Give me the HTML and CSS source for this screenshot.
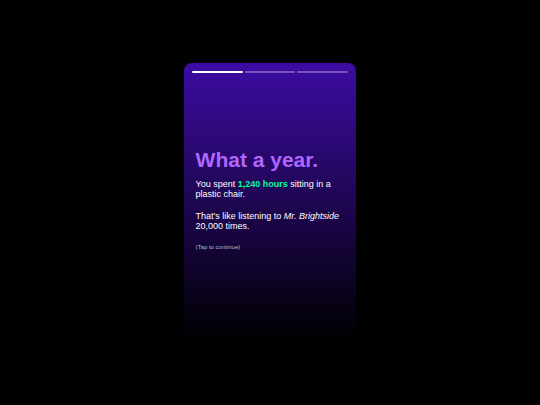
FILE: index.html
```
<!DOCTYPE html>
<html lang="en">
<head>
  <meta charset="UTF-8">
  <meta name="viewport" content="width=device-width, initial-scale=1.0">
  <title>What a year.</title>
  <link rel="stylesheet" href="styles.css">
</head>
<body>
  <main class="story">
    <div class="progress">
      <span class="bar active"></span>
      <span class="bar"></span>
      <span class="bar"></span>
    </div>
    <div class="slide">
      <h1>What a year.</h1>
      <p>You spent <strong>1,240 hours</strong> sitting in a plastic chair.</p>
      <p>That's like listening to <em>Mr. Brightside</em> 20,000 times.</p>
      <p class="hint">(Tap to continue)</p>
    </div>
  </main>
</body>
</html>
```
FILE: styles.css
```
* { margin: 0; padding: 0; box-sizing: border-box; }
body {
  min-height: 100vh;
  display: flex; align-items: center; justify-content: center;
  background: #000; color: #fff;
  font-family: "Liberation Sans", Arial, sans-serif;
  font-size: 9px; line-height: 10px;
}
.story {
  width: 32%; min-height: 69vh;
  display: flex; flex-direction: column;
  padding: 8px;
  background: linear-gradient(#3c0ca3, #000);
  border-radius: 8px;
}
.progress { display: flex; gap: 2px; }
.bar {
  flex: 1; height: 2px;
  background: rgba(255, 255, 255, 0.3);
  border-radius: 1px;
}
.bar.active { background: #fff; }
.slide {
  flex: 1;
  display: flex; flex-direction: column; justify-content: center;
  padding: 0 4px 8px;
}
h1 {
  margin-bottom: 7px;
  color: #b066ff;
  font-size: 21px; line-height: 24px;
}
p { margin-bottom: 12px; }
strong { color: #00ff9d; }
.hint { margin: 0; color: #bbb; font-size: 6px; line-height: 8px; }
```
